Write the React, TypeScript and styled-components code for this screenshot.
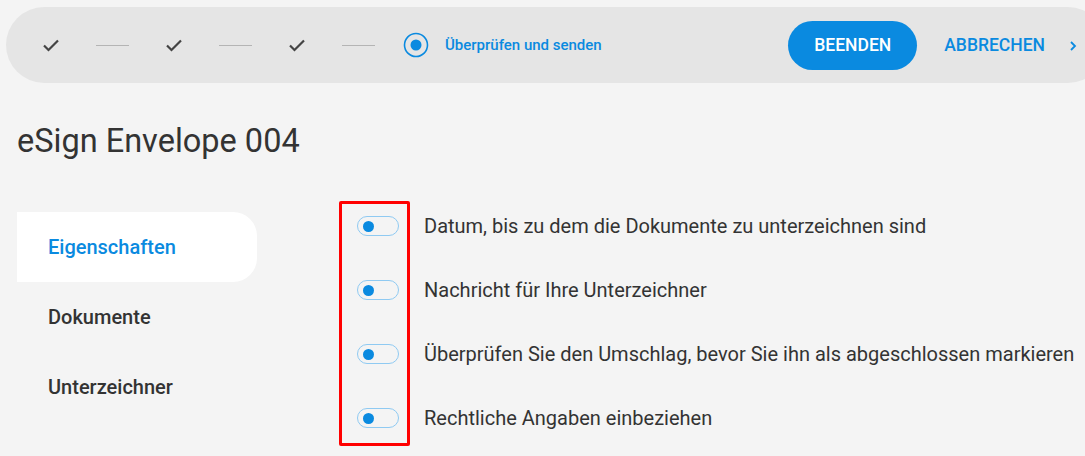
import React from "react";
import styled, { createGlobalStyle } from "styled-components";

const Global = createGlobalStyle`
  html, body { margin: 0; padding: 0; background: #f4f4f4; overflow: hidden; }
  body { font-family: Roboto, "Noto Sans", Arial, sans-serif; color: #333; }
`;

const BLUE = "#0a8ae0";

const Page = styled.div`
  width: 1085px;
  height: 456px;
  overflow: hidden;
  padding-top: 7px;
  box-sizing: border-box;
`;

const TopBar = styled.div`
  margin-left: 6px;
  width: 1100px;
  height: 76px;
  background: #e5e5e5;
  border-radius: 38px;
  display: flex;
  align-items: center;
  padding-left: 36px;
  box-sizing: border-box;
`;

const Steps = styled.div`
  display: flex;
  align-items: center;
  gap: 36px;
`;

const Connector = styled.div`
  width: 33px;
  height: 1px;
  background: #b4b4b4;
`;

const ActiveStep = styled.div`
  display: flex;
  align-items: center;
  gap: 16px;
  margin-left: -8px;
  color: ${BLUE};
  font-size: 15px;
  font-weight: 500;
`;

const Actions = styled.div`
  margin-left: auto;
  display: flex;
  align-items: center;
  margin-right: 29px;
`;

const PrimaryButton = styled.button`
  height: 49px;
  width: 129px;
  border: none;
  border-radius: 25px;
  background: ${BLUE};
  color: #fff;
  font-family: Roboto, Arial, sans-serif;
  font-size: 17.5px;
  font-weight: 500;
  padding: 0;
  cursor: pointer;
`;

const TextButton = styled.button`
  border: none;
  background: none;
  color: ${BLUE};
  font-family: Roboto, Arial, sans-serif;
  font-size: 17.5px;
  font-weight: 500;
  padding: 0;
  margin-left: 27px;
  cursor: pointer;
`;

const Chevron = styled.span`
  display: flex;
  margin-left: 24px;
  margin-top: 1px;
`;

const Title = styled.h1`
  margin: 38px 0 0 17px;
  font-size: 32.5px;
  font-weight: 400;
  color: #333;
  line-height: 40px;
`;

const Body = styled.div`
  display: flex;
  margin-top: 51px;
`;

const Nav = styled.nav`
  width: 240px;
  margin-left: 17px;
  display: flex;
  flex-direction: column;
`;

const NavItem = styled.div<{ $active?: boolean }>`
  height: 70px;
  display: flex;
  align-items: center;
  padding-left: 31px;
  font-size: 20px;
  font-weight: 500;
  color: ${(p) => (p.$active ? BLUE : "#333")};
  background: ${(p) => (p.$active ? "#fff" : "transparent")};
  border-radius: 0 24px 24px 0;
`;

const Settings = styled.div`
  position: relative;
  margin-left: 100px;
  display: flex;
  flex-direction: column;
  margin-top: -18px;
`;

const Row = styled.div`
  height: 64px;
  display: flex;
  align-items: center;
  gap: 25px;
  font-size: 20px;
  color: #333;
  white-space: nowrap;
`;

const Toggle = styled.span`
  width: 42px;
  height: 20px;
  box-sizing: border-box;
  border: 1px solid #8fcaf2;
  border-radius: 10px;
  display: flex;
  align-items: center;
  padding-left: 5px;
  flex-shrink: 0;
  &::after {
    content: "";
    width: 11px;
    height: 11px;
    border-radius: 50%;
    background: ${BLUE};
  }
`;

const Highlight = styled.div`
  position: absolute;
  left: -18px;
  top: 7px;
  width: 71px;
  height: 245px;
  box-sizing: border-box;
  border: 3px solid #f00;
  border-radius: 2px;
  pointer-events: none;
`;

const Check = () => (
  <svg width="18" height="14" viewBox="0 0 18 14">
    <path d="M2 7.5 L6.5 12 L16 2.5" fill="none" stroke="#444" strokeWidth="2.2" />
  </svg>
);

const Radio = () => (
  <svg width="26" height="26" viewBox="0 0 26 26">
    <circle cx="13" cy="13" r="11.5" fill="none" stroke={BLUE} strokeWidth="1.6" />
    <circle cx="13" cy="13" r="5.5" fill={BLUE} />
  </svg>
);

const rows = [
  "Datum, bis zu dem die Dokumente zu unterzeichnen sind",
  "Nachricht für Ihre Unterzeichner",
  "Überprüfen Sie den Umschlag, bevor Sie ihn als abgeschlossen markieren",
  "Rechtliche Angaben einbeziehen",
];

export default function App() {
  return (
    <Page>
      <Global />
      <TopBar>
        <Steps>
          <Check />
          <Connector />
          <Check />
          <Connector />
          <Check />
          <Connector />
          <ActiveStep>
            <Radio />
            <span>Überprüfen und senden</span>
          </ActiveStep>
        </Steps>
        <Actions>
          <PrimaryButton>BEENDEN</PrimaryButton>
          <TextButton>ABBRECHEN</TextButton>
          <Chevron>
            <svg width="8" height="12" viewBox="0 0 8 12">
              <path d="M2 2 L6 6 L2 10" fill="none" stroke={BLUE} strokeWidth="1.8" />
            </svg>
          </Chevron>
        </Actions>
      </TopBar>
      <Title>eSign Envelope 004</Title>
      <Body>
        <Nav>
          <NavItem $active>Eigenschaften</NavItem>
          <NavItem>Dokumente</NavItem>
          <NavItem>Unterzeichner</NavItem>
        </Nav>
        <Settings>
          {rows.map((r) => (
            <Row key={r}>
              <Toggle />
              <span>{r}</span>
            </Row>
          ))}
          <Highlight />
        </Settings>
      </Body>
    </Page>
  );
}
